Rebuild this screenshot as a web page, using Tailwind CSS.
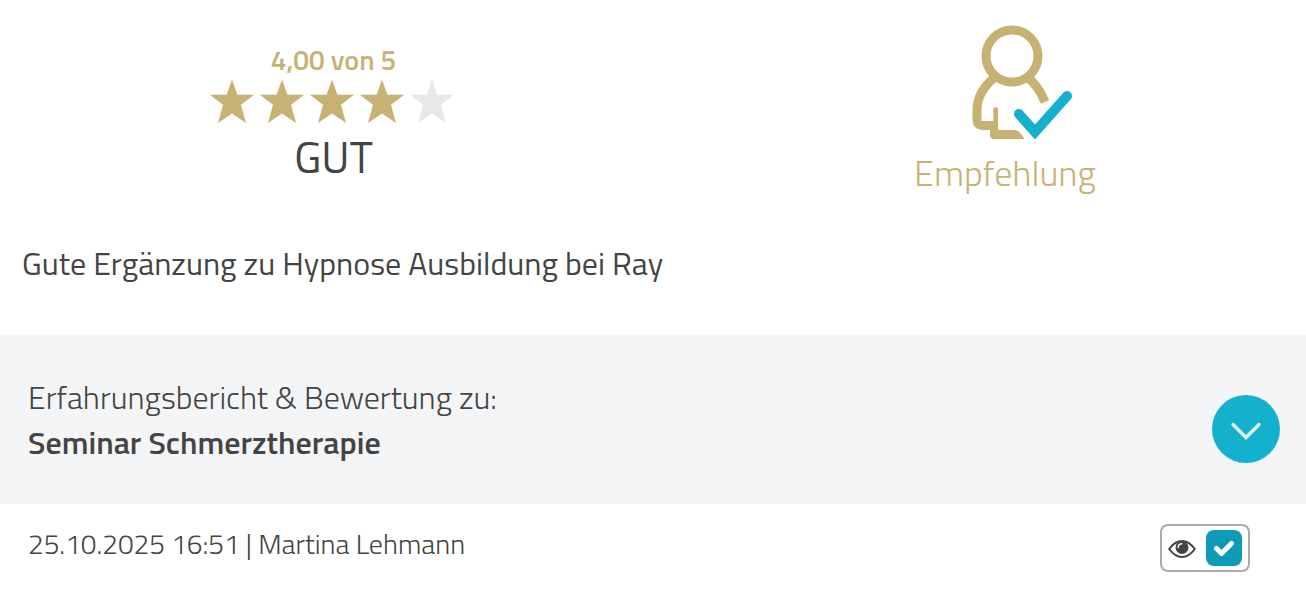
<!DOCTYPE html>
<html lang="de">
<head>
    <meta charset="UTF-8">
    <meta name="viewport" content="width=device-width, initial-scale=1.0">
    <title>Bewertung</title>
    <script src="https://cdn.jsdelivr.net/npm/@tailwindcss/browser@4"></script>
</head>
<body class="bg-white text-[#444444] font-['Titillium_Web',Roboto,sans-serif] antialiased overflow-hidden">
    <!-- Rating and recommendation -->
    <div class="flex h-[240px]">
        <div class="w-[667px] pt-11 flex flex-col items-center">
            <div class="mb-px text-[28px] leading-[31px] font-semibold text-[#c8b273] whitespace-nowrap">4,00 von 5</div>
            <div class="flex h-[50px] -ml-[3px]">
                <svg class="w-[50px] h-[50px]" viewBox="0 0 50 50" fill="#c8b273"><path d="M25 3.5l5.400 15.200h16.800L34 28.800l5 18.200L25 37.500 11 47l5-18.200L2.800 18.700h16.800z"/></svg>
                <svg class="w-[50px] h-[50px]" viewBox="0 0 50 50" fill="#c8b273"><path d="M25 3.5l5.400 15.200h16.800L34 28.800l5 18.200L25 37.500 11 47l5-18.200L2.800 18.700h16.800z"/></svg>
                <svg class="w-[50px] h-[50px]" viewBox="0 0 50 50" fill="#c8b273"><path d="M25 3.5l5.400 15.200h16.800L34 28.800l5 18.200L25 37.500 11 47l5-18.200L2.800 18.700h16.800z"/></svg>
                <svg class="w-[50px] h-[50px]" viewBox="0 0 50 50" fill="#c8b273"><path d="M25 3.5l5.400 15.200h16.800L34 28.800l5 18.200L25 37.500 11 47l5-18.200L2.800 18.700h16.800z"/></svg>
                <svg class="w-[50px] h-[50px]" viewBox="0 0 50 50" fill="#e8e8e8"><path d="M25 3.5l5.400 15.200h16.800L34 28.800l5 18.200L25 37.500 11 47l5-18.200L2.800 18.700h16.800z"/></svg>
            </div>
            <div class="text-[44px] leading-[62px] whitespace-nowrap">GUT</div>
        </div>
        <div class="w-[602px] ml-[37px] pt-[25px] flex flex-col items-center">
            <svg class="w-[100px] h-[115px] ml-[34px]" viewBox="0 0 100 115" fill="none">
                <g stroke="#c8b273" stroke-width="9">
                    <circle cx="40" cy="31" r="26"/>
                    <path d="M23 52C12 61 5 72 5 85v10q0 5.500 5.500 5.500H24"/>
                    <path d="M55 52C62 57 68 65 73 77"/>
                </g>
                <path d="M21.300 84.500q0-2.500 2.400-2.500t2.400 2.500V105h16q5 0 10.500 9H22q-4 0-4-4v-9h3.300z" fill="#c8b273"/>
                <path d="M47 89l16 18 32-36" stroke="#fff" stroke-width="16" stroke-linecap="round"/>
                <path d="M47 89l16 18 32-36" stroke="#14b1ce" stroke-width="10" stroke-linecap="round"/>
            </svg>
            <div class="mt-[5px] text-[36px] leading-[56px] font-light text-[#c8b273] whitespace-nowrap">Empfehlung</div>
        </div>
    </div>

    <!-- Review text -->
    <div class="h-[95px] pl-[22px] text-[32px] leading-[46px] whitespace-nowrap">Gute Ergänzung zu Hypnose Ausbildung bei Ray</div>

    <!-- Reviewed offer -->
    <div class="h-[169px] bg-[#f3f5f7] pl-7 pr-[26px] flex justify-between">
        <div class="pt-10 text-[32px] leading-[45px] whitespace-nowrap">
            <div class="font-light">Erfahrungsbericht &amp; Bewertung zu:</div>
            <div class="font-semibold">Seminar Schmerztherapie</div>
        </div>
        <button class="mt-[60px] size-[68px] rounded-full bg-[#14b1ce] flex items-center justify-center">
            <svg class="w-8 h-5 mt-[3px]" viewBox="0 0 32 20" fill="none" stroke="#e2f5f9" stroke-width="3.4" stroke-linecap="round"><path d="M3 3.500l13 13L29 3.500"/></svg>
        </button>
    </div>

    <!-- Date and author -->
    <div class="h-[90px] pl-[28px] pr-[56px] flex justify-between">
        <div class="pt-4 text-[28px] leading-[48px] font-light whitespace-nowrap">25.10.2025 16:51 | Martina Lehmann</div>
        <div class="mt-5 w-[90px] h-12 border-2 border-[#aaaaaa] rounded-lg flex items-center justify-between px-[6px]">
            <svg class="w-7 h-5 mt-px" viewBox="0 0 28 20" fill="none">
                <path d="M1.200 10Q7 2 14 2t12.800 8Q21 18 14 18T1.200 10z" stroke="#444" stroke-width="2"/>
                <circle cx="14" cy="8.500" r="6.500" fill="#444"/>
                <path d="M10.200 8.500q0-3.300 3.500-3.700" stroke="#fff" stroke-width="1.400" stroke-linecap="round"/>
            </svg>
            <div class="size-9 rounded-lg bg-[#0e9bb8] flex items-center justify-center">
                <svg class="w-[22px] h-[18px]" viewBox="0 0 22 18" fill="none" stroke="#fff" stroke-width="5" stroke-linecap="round" stroke-linejoin="round"><path d="M3.500 9.500l5 5L18.500 4.500"/></svg>
            </div>
        </div>
    </div>
</body>
</html>
